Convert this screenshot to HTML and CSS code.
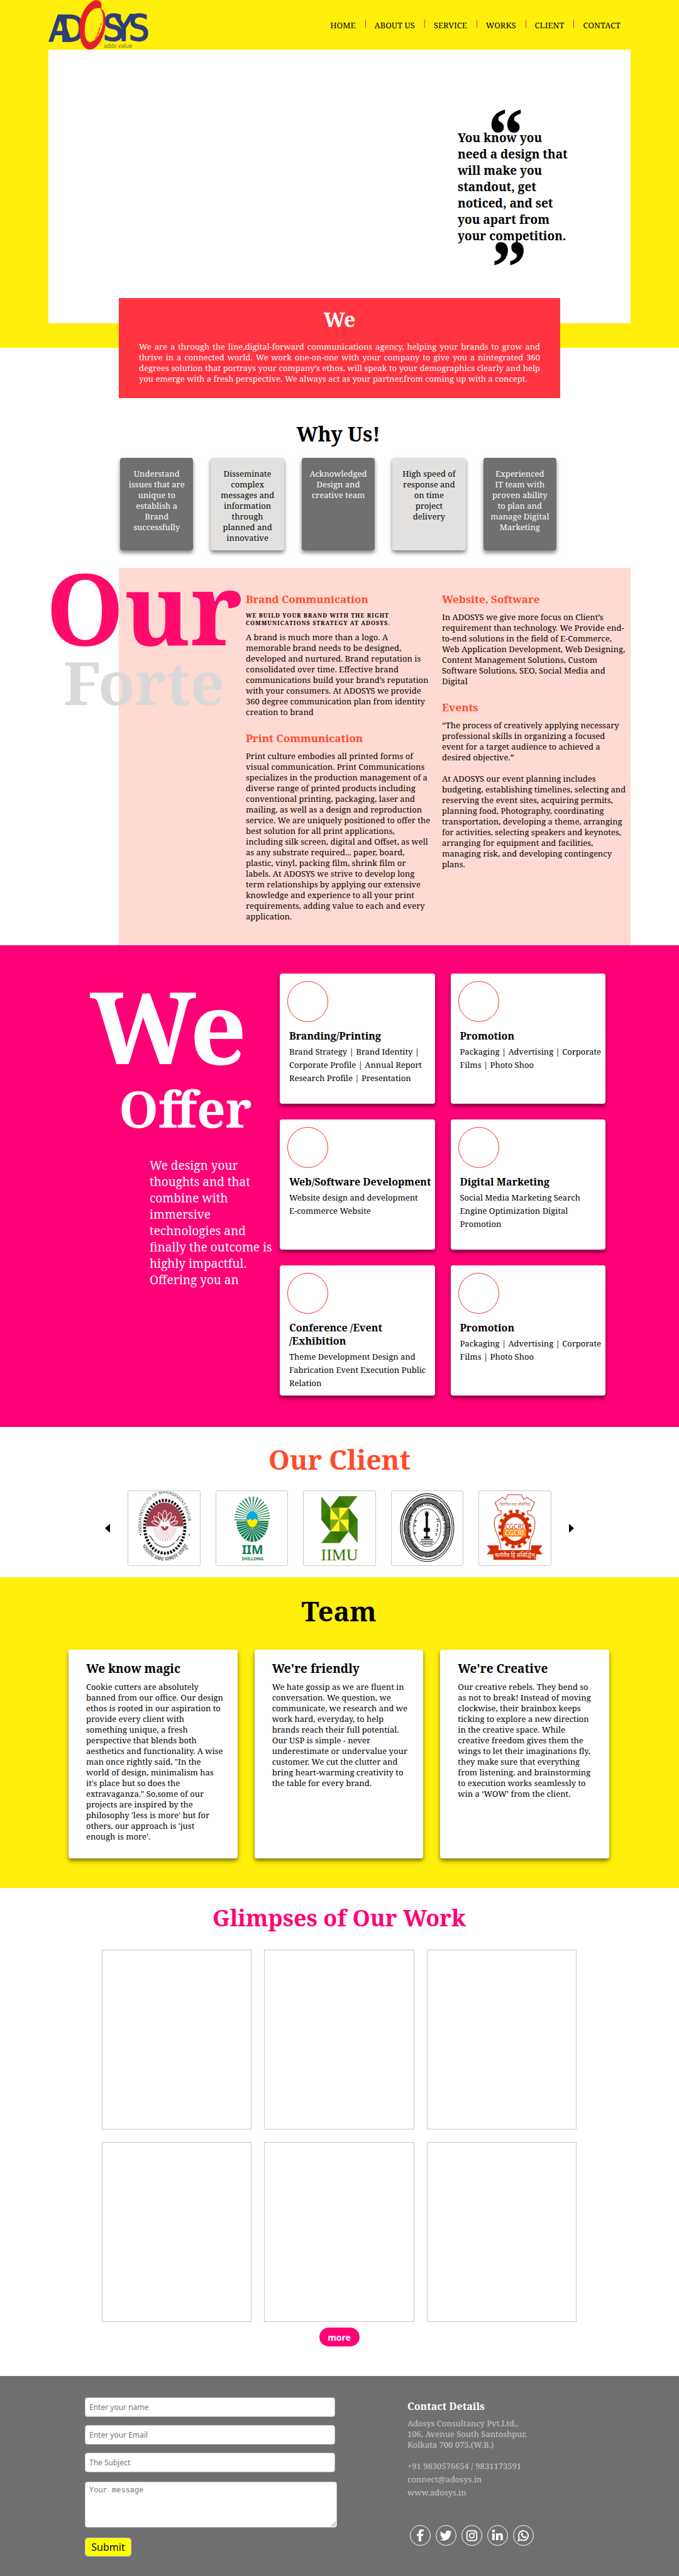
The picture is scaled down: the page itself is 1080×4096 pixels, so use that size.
FILE: index.html
```html
<!DOCTYPE html>
<html lang="en">
<head>
<meta charset="utf-8">
<meta name="viewport" content="width=device-width, initial-scale=1">
<title>Adosys</title>
<link rel="stylesheet" href="styles.css">
</head>
<body>
<header class="top">
  <div class="bar">
    <a class="logo" href="#home" aria-label="Adosys">
      <svg viewBox="0 0 160 79" width="160" height="79">
        <g class="logo-letters" fill="#2f3e78" stroke="#2f3e78" stroke-width="2">
          <text x="1 18" y="66">AD</text>
          <text x="87 104 128" y="65">SYS</text>
        </g>
        <path fill="#e51f26" fill-rule="evenodd" d="M84 13C86 6 83 0 76 0C62 3 50 22 49 45C49 65 56 79 66 79C80 78 91 55 91 33C91 22 88 15 82 13C86 18 88 27 87 37C84 54 75 66 66 67C60 66 57 57 58 43C59 26 68 13 78 13Z"/>
        <path fill="none" stroke="#e51f26" stroke-width="1" stroke-dasharray="5 2" d="M84 36C82 48 79 55 76 60M81 45C79 53 77 57 74 62"/>
        <text class="logo-tag" x="88" y="76" fill="#6c6a2a">adds value</text>
      </svg>
    </a>
    <nav class="menu" id="home">
      <a href="#home">HOME</a><a href="#about">ABOUT US</a><a href="#service">SERVICE</a><a href="#works">WORKS</a><a href="#client">CLIENT</a><a href="#contact">CONTACT</a>
    </nav>
  </div>
  <div class="hero">
    <blockquote class="quote">
      <span class="mark mark-open">“</span>
      <p>You know you need a design that will make you standout, get noticed, and set you apart from your competition.</p>
      <span class="mark mark-close">”</span>
    </blockquote>
  </div>
</header>

<main>
<section class="about" id="about">
  <h2>We</h2>
  <p>We are a through the line,digital-forward communications agency, helping your brands to grow and thrive in a connected world. We work one-on-one with your company to give you a nintegrated 360 degrees solution that portrays your company’s ethos, will speak to your demographics clearly and help you emerge with a fresh perspective. We always act as your partner,from coming up with a concept.</p>
</section>

<section class="why">
  <h2>Why Us!</h2>
  <ul>
    <li>Understand issues that are unique to establish a Brand successfully</li>
    <li>Disseminate complex messages and information through planned and innovative</li>
    <li>Acknowledged Design and creative team</li>
    <li>High speed of response and on time<br>project delivery</li>
    <li>Experienced IT&nbsp;team with proven ability to plan and manage Digital Marketing</li>
  </ul>
</section>

<section class="forte" id="service">
  <h2 class="big"><span class="big-first">Our</span><span class="big-second">Forte</span></h2>
  <div class="column">
    <h3>Brand Communication</h3>
    <h4>WE BUILD YOUR BRAND WITH THE RIGHT COMMUNICATIONS STRATEGY AT ADOSYS.</h4>
    <p>A brand is much more than a logo. A memorable brand needs to be designed, developed and nurtured. Brand reputation is consolidated over time. Effective brand communications build your brand’s reputation with your consumers. At ADOSYS we provide 360 degree communication plan from identity creation to brand</p>
    <h3>Print Communication</h3>
    <p>Print culture embodies all printed forms of visual communication. Print Communications specializes in the production management of a diverse range of printed products including conventional printing, packaging, laser and mailing, as well as a design and reproduction service. We are uniquely positioned to offer the best solution for all print applications, including silk screen, digital and Offset, as well as any substrate required... paper, board, plastic, vinyl, packing film, shrink film or labels. At ADOSYS we strive to develop long term relationships by applying our extensive knowledge and experience to all your print requirements, adding value to each and every application.</p>
  </div>
  <div class="column">
    <h3>Website, Software</h3>
    <p>In ADOSYS we give more focus on Client’s requirement than technology. We Provide end-to-end solutions in the field of E-Commerce, Web Application Development, Web Designing, Content Management Solutions, Custom Software Solutions, SEO, Social Media and Digital</p>
    <h3>Events</h3>
    <p>“The process of creatively applying necessary professional skills in organizing a focused event for a target audience to achieved a desired objective.”<br><br>At ADOSYS our event planning includes budgeting, establishing timelines, selecting and reserving the event sites, acquiring permits, planning food, Photography, coordinating transportation, developing a theme, arranging for activities, selecting speakers and keynotes, arranging for equipment and facilities, managing risk, and developing contingency plans.</p>
  </div>
</section>

<section class="offer">
  <div class="pitch">
    <h2 class="big"><span class="big-first">We</span><span class="big-second">Offer</span></h2>
    <p>We design your thoughts and that combine with immersive technologies and finally the outcome is highly impactful. Offering you an</p>
  </div>
  <div class="services">
    <article><i></i><h3>Branding/Printing</h3><p>Brand Strategy | Brand Identity | Corporate Profile | Annual Report Research Profile | Presentation</p></article>
    <article><i></i><h3>Promotion</h3><p>Packaging | Advertising | Corporate Films | Photo Shoo</p></article>
    <article><i></i><h3>Web/Software Development</h3><p>Website design and development<br>E-commerce Website</p></article>
    <article><i></i><h3>Digital Marketing</h3><p>Social Media Marketing Search Engine Optimization Digital Promotion</p></article>
    <article><i></i><h3>Conference /Event /Exhibition</h3><p>Theme Development Design and Fabrication Event Execution Public Relation</p></article>
    <article><i></i><h3>Promotion</h3><p>Packaging | Advertising | Corporate Films | Photo Shoo</p></article>
  </div>
</section>

<section class="clients" id="client">
  <h2>Our Client</h2>
  <div class="carousel">
    <button class="arrow" type="button" aria-label="Previous"><svg viewBox="0 0 9 14" width="9" height="14"><path d="M8 0V14L1 8Q0 7 1 6Z"/></svg></button>
    <ul>
      <li>
        <svg viewBox="18 30 440 456" role="img" aria-label="IIM Raipur">
          <defs>
            <path id="raipur-top" d="M102 284A145 194 0 1 1 384 284"/>
            <path id="raipur-low" d="M84 300A160 180 0 0 0 402 300"/>
          </defs>
          <ellipse cx="243" cy="249" rx="124" ry="163" fill="none" stroke="#111" stroke-width="18" stroke-dasharray="12 8"/>
          <path fill="#a33d4c" d="M128 246A114 146 0 0 1 358 246Z"/>
          <g fill="none" stroke="#fff" stroke-width="4">
            <ellipse cx="243" cy="198" rx="13" ry="50"/>
            <ellipse cx="243" cy="200" rx="13" ry="46" transform="rotate(24 243 246)"/>
            <ellipse cx="243" cy="200" rx="13" ry="46" transform="rotate(-24 243 246)"/>
            <ellipse cx="243" cy="202" rx="13" ry="46" transform="rotate(48 243 246)"/>
            <ellipse cx="243" cy="202" rx="13" ry="46" transform="rotate(-48 243 246)"/>
            <ellipse cx="243" cy="205" rx="11" ry="44" transform="rotate(70 243 246)"/>
            <ellipse cx="243" cy="205" rx="11" ry="44" transform="rotate(-70 243 246)"/>
          </g>
          <path fill="#fff" d="M205 246L222 205L236 225L243 190L250 225L264 205L281 246Z"/>
          <path fill="none" stroke="#dcaab2" stroke-width="62" stroke-dasharray="3 6" d="M200 248A43 60 0 0 0 286 248"/>
          <path fill="#a33d4c" d="M218 246Q243 300 268 246Z"/>
          <circle cx="243" cy="250" r="6" fill="#fff"/>
          <path fill="none" stroke="#333" stroke-width="5" d="M146 306Q158 306 166 328L176 336M342 306Q330 306 322 328L312 336"/>
          <path fill="none" stroke="#555" stroke-width="9" stroke-dasharray="5 3" d="M180 346Q243 404 306 346"/>
          <text class="mark-sans" font-size="26" fill="#444"><textPath href="#raipur-top">INDIAN INSTITUTE OF MANAGEMENT RAIPUR</textPath></text>
          <text class="mark-sans" font-size="36" fill="#444"><textPath href="#raipur-low" startOffset="50%" text-anchor="middle">भारतीय प्रबंध संस्थान रायपुर</textPath></text>
          <circle cx="92" cy="297" r="4"/><circle cx="394" cy="299" r="4"/>
        </svg>
      </li>
      <li>
        <svg viewBox="550 30 440 456" role="img" aria-label="IIM Shillong">
          <path fill="none" stroke="#2b8a5d" stroke-width="92" stroke-dasharray="5 8" d="M708 208A64 99 0 0 1 836 208"/>
          <path fill="#0c7a4c" d="M674 212A99 130 0 0 0 872 212Z"/>
          <path fill="none" stroke="#fff" stroke-width="96" stroke-dasharray="3 9" d="M722 216A51 82 0 0 0 824 216"/>
          <ellipse cx="772" cy="205" rx="35" ry="48" fill="#ffee00" stroke="#4d9a31" stroke-width="4"/>
          <path fill="#00aaee" d="M739 200A33 46 0 0 1 805 200Q797 214 788 198L772 212L758 198Q748 216 739 200Z"/>
          <text class="mark-sans mark-bold" x="773" y="418" font-size="76" text-anchor="middle" fill="#0c7a4c">IIM</text>
          <text class="mark-sans mark-bold" x="773" y="456" font-size="26" text-anchor="middle" fill="#0c7a4c">SHILLONG</text>
        </svg>
      </li>
      <li>
        <svg viewBox="30 30 424 456" role="img" aria-label="IIM Udaipur">
          <path fill="#44800f" d="M131 63L187 132V275L131 205ZM242 61H353L298 132H187ZM298 132L354 205V347L298 277ZM187 277H298L242 349H131Z"/>
          <path fill="#357300" d="M187 132L131 205L187 275ZM242 61L187 132H298ZM298 132L354 205L298 277ZM187 277H298L242 349Z"/>
          <path fill="#7da70f" d="M187 132H298V277H187Z"/>
          <path fill="#fff22d" d="M187 132L242 205H187ZM242 132H298L242 205ZM242 205H298V277ZM242 205V277H187Z"/>
          <text class="mark-serif" x="243" y="456" font-size="100" text-anchor="middle" fill="#357300">IIMU</text>
        </svg>
      </li>
      <li>
        <svg viewBox="541 30 425 456" role="img" aria-label="Indian Association for the Cultivation of Science">
          <defs><path id="iacs-ring" d="M702 376A104 136 0 1 1 800 376"/></defs>
          <g fill="none" stroke="#111">
            <ellipse cx="752" cy="254" rx="164" ry="208" stroke-width="4"/>
            <ellipse cx="752" cy="254" rx="154" ry="196" stroke-width="4"/>
            <ellipse cx="752" cy="254" rx="128" ry="165" stroke-width="30" stroke-dasharray="5 3"/>
            <ellipse cx="752" cy="254" rx="141" ry="181" stroke-width="4" stroke-dasharray="78 16"/>
            <ellipse cx="752" cy="254" rx="116" ry="151" stroke-width="4"/>
            <ellipse cx="752" cy="254" rx="84" ry="116" stroke-width="3"/>
          </g>
          <text class="mark-sans mark-bold" font-size="20" fill="#111"><textPath href="#iacs-ring">INDIAN ASSOCIATION FOR THE CULTIVATION OF SCIENCE</textPath></text>
          <path fill="#111" d="M743 160Q750 148 757 160L762 172L757 186V254A14 14 0 0 1 755 282V308H768V322H732V308H745V282A14 14 0 0 1 743 254V186L738 172Z"/>
          <path fill="none" stroke="#111" stroke-width="2" stroke-dasharray="3 3" d="M733 172A17 20 0 1 1 767 172"/>
          <g fill="none" stroke="#111" stroke-width="7" stroke-dasharray="6 3"><path d="M716 328H786M712 341H790M722 354H782"/></g>
          <g fill="none" stroke="#111" stroke-width="4"><path d="M672 208L690 214M680 212V226M670 238L684 242M676 240V250M668 290L684 282M676 286V298M808 200L824 206M812 216H826M812 232Q828 240 812 250M808 262Q826 268 808 280M802 290Q820 294 806 304"/></g>
        </svg>
      </li>
      <li>
        <svg viewBox="1055 30 425 456" role="img" aria-label="CGCRI">
          <path fill="none" stroke="#cf5a42" stroke-width="5" d="M1184 392Q1180 340 1156 290Q1134 240 1146 196Q1156 176 1184 172V150H1168L1146 100L1192 68L1212 82L1224 52H1308L1322 82L1342 68L1390 100L1366 150H1346V172Q1380 176 1390 210Q1396 250 1378 296Q1354 350 1356 392"/>
          <text class="mark-sans" x="1268" y="120" font-size="22" text-anchor="middle" fill="#b8705c">वैज्ञानिक तथा औद्योगिक</text>
          <ellipse cx="1268" cy="263" rx="92" ry="110" fill="none" stroke="#d52c00" stroke-width="20" stroke-dasharray="20 20"/>
          <ellipse cx="1268" cy="263" rx="74" ry="86" fill="none" stroke="#d52c00" stroke-width="26"/>
          <ellipse cx="1268" cy="263" rx="64" ry="70" fill="#fff"/>
          <path fill="#ff8c1a" d="M1196 263H1338V310H1196Z"/>
          <text class="mark-sans" x="1266" y="260" font-size="40" text-anchor="middle" fill="#b5341a">CGCRI</text>
          <text class="mark-sans" x="1266" y="302" font-size="40" text-anchor="middle" fill="#fff">CGCRI</text>
          <path fill="#d52c00" d="M1096 363H1168V392H1368V363H1438L1416 390L1438 418H1398V452H1136V418H1096L1118 390Z"/>
          <text class="mark-sans" x="1268" y="434" font-size="34" text-anchor="middle" fill="#fff">कर्मणैव हि संसिद्धिम्</text>
        </svg>
      </li>
    </ul>
    <button class="arrow" type="button" aria-label="Next"><svg viewBox="0 0 9 14" width="9" height="14"><path d="M1 0V14L8 8Q9 7 8 6Z"/></svg></button>
  </div>
</section>

<section class="team">
  <h2>Team</h2>
  <div class="people">
    <article><h3>We know magic</h3><p>Cookie cutters are absolutely banned from our office. Our design ethos is rooted in our aspiration to provide every client with something unique, a fresh perspective that blends both aesthetics and functionality. A wise man once rightly said, "In the world of design, minimalism has it's place but so does the extravaganza." So,some of our projects are inspired by the philosophy 'less is more' but for others, our approach is 'just enough is more'.</p></article>
    <article><h3>We're friendly</h3><p>We hate gossip as we are fluent in conversation. We question, we communicate, we research and we work hard, everyday, to help brands reach their full potential. Our USP is simple - never underestimate or undervalue your customer. We cut the clutter and bring heart-warming creativity to the table for every brand.</p></article>
    <article><h3>We're Creative</h3><p>Our creative rebels. They bend so as not to break! Instead of moving clockwise, their brainbox keeps ticking to explore a new direction in the creative space. While creative freedom gives them the wings to let their imaginations fly, they make sure that everything from listening, and brainstorming to execution works seamlessly to win a ‘WOW’ from the client.</p></article>
  </div>
</section>

<section class="works" id="works">
  <h2>Glimpses of Our Work</h2>
  <div class="gallery"><div></div><div></div><div></div><div></div><div></div><div></div></div>
  <button class="more" type="button">more</button>
</section>
</main>

<footer class="footer" id="contact">
  <form class="form">
    <input type="text" aria-label="Name" placeholder="Enter your name">
    <input type="email" aria-label="Email" placeholder="Enter your Email">
    <input type="text" aria-label="Subject" placeholder="The Subject">
    <textarea aria-label="Message" placeholder="Your message"></textarea>
    <button class="submit" type="submit">Submit</button>
  </form>
  <div class="details">
    <h3>Contact Details</h3>
    <address>Adosys Consultancy Pvt.Ltd.,<br>106, Avenue South Santoshpur,<br>Kolkata 700 075,(W.B.)</address>
    <p>+91 9830576654 / 9831173591</p>
    <p><a href="mailto:connect@adosys.in">connect@adosys.in</a></p>
    <p><a href="http://www.adosys.in">www.adosys.in</a></p>
    <div class="social">
      <a href="#facebook" aria-label="Facebook"><svg viewBox="0 0 42 42"><path d="M17.500 34V22H13.500V17.500H17.500V14C17.500 10 20 8 23.500 8H28V12.500H25C23.500 12.500 22.800 13.200 22.800 14.800V17.500H27.500L27 22H22.800V34Z"/></svg></a>
      <a href="#twitter" aria-label="Twitter"><svg viewBox="0 0 42 42"><path d="M33.500 12.500C32.700 14 31.800 14.800 31 15.500C31.300 25 24 32 15.500 32C12.500 32 10 31.200 8 29.800C11 30 13.300 29.200 15.300 27.700C13 27.500 11.200 26 10.500 24L12.700 23.900C10.300 23.200 8.600 21 8.600 18.700L10.900 19.300C8.500 17.500 8 14.500 9.300 12C12 15.400 15.800 17.300 20.200 17.500C19.300 13.500 22 10.500 25.500 10.500C27 10.500 28.500 11.200 29.400 12.200L32.800 11L30.700 13.700Z"/></svg></a>
      <a href="#instagram" aria-label="Instagram"><svg viewBox="0 0 42 42"><rect x="10.500" y="11" width="21" height="21" rx="5" fill="none" stroke="#fff" stroke-width="2.500"/><circle cx="21" cy="21.500" r="5" fill="none" stroke="#fff" stroke-width="2.500"/><circle cx="27" cy="15.300" r="1.600"/></svg></a>
      <a href="#linkedin" aria-label="LinkedIn"><svg viewBox="0 0 42 42"><circle cx="12" cy="11.500" r="3.200"/><path d="M9.200 16.500H14.600V31H9.200ZM17.500 16.500H22.500V18.500C23.600 16.900 25.300 16 27.400 16C31 16 32.300 18.500 32.300 22V31H27V23C27 21 26.300 20 25 20C23.500 20 22.800 21.200 22.800 23V31H17.500Z"/></svg></a>
      <a href="#whatsapp" aria-label="WhatsApp"><svg viewBox="0 0 42 42"><path fill="none" stroke="#fff" stroke-width="2.500" d="M10.300 32L12 26.300A10.300 10.300 0 1 1 16 30.300Z"/><path d="M17 16C18 15 19 15.200 19.500 16.200L20.300 18.200C20.300 19 19.500 19.700 19.300 20.200C20.200 22 21.600 23.200 23.300 23.900C24 23.400 24.500 22.500 25.200 22.700L27.500 23.900C27.500 25.500 26.300 27 24.600 27C20.500 26.800 16 22.500 16 18.500C16 17.500 16.400 16.600 17 16Z"/></svg></a>
    </div>
  </div>
</footer>
</body>
</html>
```
FILE: styles.css
```css
* { box-sizing: border-box; }

body {
  margin: 0;
  background: #fff;
  color: #000;
  font: 13px/17px "Noto Serif", "DejaVu Serif", serif;
}

h2, h3, h4, p, ul, blockquote { margin: 0; padding: 0; }
ul { list-style: none; }
a { color: inherit; text-decoration: none; }
button { font: inherit; padding: 0; cursor: pointer; }

/* header and hero */
.top { background: #ffef0b; padding: 0 77px 39px; }
.bar { display: flex; justify-content: space-between; height: 79px; }
.logo svg { display: block; }
.logo-letters { font: 57px "DejaVu Sans Condensed", "DejaVu Sans", sans-serif; }
.logo-tag { font: 9px "Open Sans", sans-serif; }
.menu { display: flex; align-items: flex-start; padding: 31px 1px 0 0; }
.menu a { padding: 0 15px 0 14px; height: 13px; line-height: 18px; border-left: 1px solid #f33440; }
.menu a:first-child { border-left: 0; }
.hero { background: #fff; min-height: 435px; padding: 75px 93px 0 0; display: flex; justify-content: flex-end; }
.quote { width: 182px; font-size: 19px; line-height: 26px; font-weight: bold; }
.mark { display: block; height: 52px; font-size: 120px; line-height: 120px; }
.mark-open { padding-left: 47px; }
.mark-close { padding-left: 53px; margin-top: -23px; }

/* about panel */
.about { background: #ff3440; color: #fff; margin: -79px 189px 0; padding: 12px 32px 22px; text-align: justify; position: relative; }
.about h2, .why h2 { font-size: 32px; line-height: 44px; text-align: center; }
.about p { margin-top: 13px; }

/* why us */
.why { padding: 35px 195px 28px 191px; }
.why ul { display: grid; grid-template-columns: repeat(5, 1fr); gap: 28px; margin-top: 16px; }
.why li { background: #707070; color: #fff; text-align: center; min-height: 147px; padding: 17px 10px 8px; border-radius: 4px; box-shadow: 0 4px 6px rgba(0, 0, 0, .5); }
.why li:nth-child(even) { background: #e2e1df; color: #000; }

/* oversized headings */
.big span { display: block; }
.big-first { font-size: 158px; line-height: 124px; }
.big-second { font-size: 95px; line-height: 114px; }

/* forte */
.forte { background: #ffdad3; margin: 0 77px 0 189px; min-height: 600px; display: grid; grid-template-columns: 202px 312px 1fr; }
.forte .big { margin-left: -116px; }
.forte .big-first { color: #ff0b6b; }
.forte .big-second { color: #d9d9d9; padding-left: 28px; }
.column { padding: 39px 4px 20px 0; }
.column h3 { font-size: 17px; line-height: 22px; color: #ff4b2b; margin-bottom: 9px; }
.column h4 { font-size: 9px; line-height: 12px; letter-spacing: 1px; margin-bottom: 8px; padding-right: 56px; }
.column p { margin-bottom: 22px; }
.column p:last-child { margin-bottom: 0; }
.column:nth-child(2) p { padding-right: 12px; }

/* offer */
.offer { background: #f07; color: #fff; padding: 45px 117px 50px 143px; display: grid; grid-template-columns: 302px 1fr; }
.pitch { padding-top: 21px; }
.offer .big-second { font-size: 80px; line-height: 100px; padding: 19px 0 0 46px; }
.pitch p { font-size: 19px; line-height: 26px; margin: 28px 0 0 95px; }
.services { display: grid; grid-template-columns: 1fr 1fr; gap: 25px; }
.services article { background: #fff; color: #000; min-height: 207px; padding: 12px 2px 8px 15px; border-radius: 4px; box-shadow: 0 4px 6px rgba(0, 0, 0, .5); }
.services i { display: block; width: 65px; height: 65px; margin-left: -3px; border: 1px solid #ff2a2a; border-radius: 50%; }
.services h3 { font-size: 16px; line-height: 21px; margin: 12px 0 4px; }
.services p { line-height: 21px; }

/* clients */
.clients { padding: 23px 167px 18px; }
.clients h2, .team h2 { font-size: 43px; line-height: 58px; text-align: center; }
.clients h2 { color: #ff4b2b; }
.carousel { display: flex; align-items: center; gap: 27px; margin-top: 20px; }
.carousel ul { flex: 1; display: grid; grid-template-columns: repeat(5, 1fr); gap: 24px; }
.carousel li { height: 120px; border: 1px solid #c8c8c8; border-radius: 3px; }
.carousel li svg { display: block; width: 100%; height: 100%; }
.arrow { border: 0; background: none; width: 9px; height: 14px; }
.arrow svg { display: block; }
.mark-sans { font-family: "Noto Sans", "Open Sans", sans-serif; }
.mark-serif { font-family: "Liberation Serif", serif; }
.mark-bold { font-weight: bold; }

/* team */
.team { background: #ffef0b; padding: 25px 111px 47px 109px; }
.people { display: grid; grid-template-columns: repeat(3, 1fr); gap: 27px; margin-top: 32px; }
.people article { background: #fff; min-height: 332px; padding: 17px 20px 20px 28px; border-radius: 4px; box-shadow: 0 4px 6px rgba(0, 0, 0, .5); }
.people h3 { font-size: 19px; line-height: 26px; margin-bottom: 8px; }

/* works */
.works { padding: 25px 163px 47px 162px; text-align: center; }
.works h2 { font-size: 36px; line-height: 46px; color: #f07; }
.gallery { display: grid; grid-template-columns: repeat(3, 1fr); gap: 20px; margin: 27px 0 9px; }
.gallery div { height: 286px; border: 1px solid #c8c8c8; }
.more { width: 64px; height: 30px; border: 0; border-radius: 15px; background: #f07; color: #fff; font: bold 14px "Noto Sans", sans-serif; }

/* footer */
.footer { background: #707070; color: #fff; padding: 34px 135px 33px; display: grid; grid-template-columns: 401px 1fr; column-gap: 112px; }
.form { display: flex; flex-direction: column; align-items: flex-start; }
.form input { width: 398px; height: 31px; margin: 0 0 13px; padding: 0 6px; border: 1px solid #c8c8c8; border-radius: 4px; background: #fff; font: 12px "Noto Sans", sans-serif; }
.form textarea { width: 100%; height: 73px; margin: 2px 0 16px; padding: 6px; border: 1px solid #c8c8c8; border-radius: 4px; background: #fff; font: 12px "Liberation Mono", monospace; }
.form ::placeholder { color: #757575; }
.submit { width: 74px; height: 30px; border: 1px solid #c8c8c8; border-radius: 5px; background: #ff0; color: #000; font: 16px "Noto Sans", sans-serif; }
.details { color: #c8c8c8; }
.details h3 { color: #fff; font-size: 16px; line-height: 24px; margin: 2px 0 7px; }
.details address { font-style: normal; margin-bottom: 17px; }
.details p { margin-bottom: 4px; }
.social { display: flex; gap: 8px; margin: 43px 0 0 4px; }
.social a { width: 33px; height: 33px; border: 1px solid #fff; border-radius: 50%; }
.social svg { display: block; width: 100%; height: 100%; fill: #fff; }
```
